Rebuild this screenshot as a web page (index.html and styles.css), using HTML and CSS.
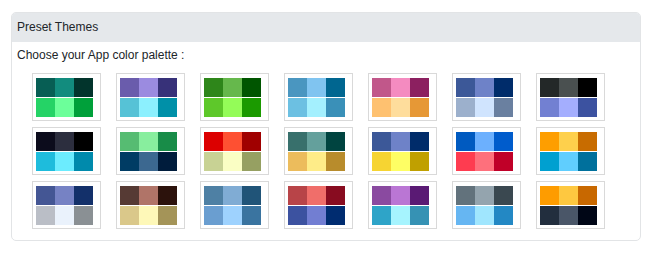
FILE: index.html
```html
<!DOCTYPE html>
<html lang="en">
<head>
  <meta charset="UTF-8">
  <meta name="viewport" content="width=device-width, initial-scale=1.0">
  <title>Preset Themes</title>
  <link rel="stylesheet" href="styles.css">
</head>
<body>
  <div class="panel">
    <div class="panel-heading">Preset Themes</div>
    <div class="panel-body">
      <p class="hint">Choose your App color palette :</p>
      <div class="theme-grid" id="themeGrid"></div>
    </div>
  </div>

  <script>
    // Each theme: 3 header colours + 3 accent colours
    const themes = [
      ['#075e54', '#128c7e', '#02342c', '#25d366', '#6cff9a', '#00a03a'],
      ['#6a5cac', '#9b8be0', '#373179', '#56c2d6', '#8cf0fe', '#0090a8'],
      ['#2e861a', '#66b84c', '#005500', '#5ec82a', '#94fc58', '#1b9a00'],
      ['#4a96c0', '#80c4f0', '#006690', '#6cc0e2', '#a4f0fe', '#3a90b8'],
      ['#c1578a', '#f48bc0', '#8c2060', '#fec170', '#fedd9c', '#e69836'],
      ['#3c5898', '#6e82c8', '#002c6a', '#9cb0cc', '#d0e4fe', '#6a80a0'],
      ['#232828', '#4a5050', '#000000', '#7280d2', '#a4aefe', '#3c52a0'],

      ['#0c0c1c', '#2c2e3e', '#000000', '#1ebcdc', '#6cecfe', '#008aac'],
      ['#56bc72', '#88ee9e', '#188c48', '#003c64', '#3c6890', '#001c3c'],
      ['#dc0000', '#fe5032', '#a00000', '#c8d294', '#fafec4', '#96a062'],
      ['#38706c', '#64a09c', '#004440', '#ecbc5c', '#feec88', '#b88c2c'],
      ['#3c5898', '#6e82c8', '#002c6a', '#f6d432', '#fefe64', '#c0a000'],
      ['#005ac0', '#6cb0fe', '#005ccc', '#fe3c50', '#fe707c', '#c00028'],
      ['#fe9e00', '#fed04c', '#c86c00', '#00a0d0', '#60cefe', '#00709c'],

      ['#445694', '#7682c4', '#13306a', '#babec6', '#eaf2fc', '#8a9094'],
      ['#563a34', '#b07468', '#2c120c', '#dac88a', '#fef8b8', '#a49458'],
      ['#4e80a4', '#80acd4', '#205478', '#6a9ed0', '#9ed2fe', '#3a74a0'],
      ['#b84448', '#f06e6a', '#880c20', '#3c52a0', '#727ed2', '#002c70'],
      ['#8a4aa0', '#ba76d4', '#5a1a74', '#2ea4c8', '#a6f4fe', '#3692b4'],
      ['#62727c', '#94a4ae', '#3a4850', '#66b6f2', '#a0e6fe', '#2388c4'],
      ['#fe9c00', '#fec840', '#c86800', '#222e3e', '#4a5668', '#000616']
    ];

    const grid = document.getElementById('themeGrid');

    themes.forEach(colors => {
      const item = document.createElement('div');
      item.className = 'theme';
      const swatch = document.createElement('div');
      swatch.className = 'swatch';
      colors.forEach(c => {
        const cell = document.createElement('span');
        cell.style.background = c;
        swatch.appendChild(cell);
      });
      item.appendChild(swatch);
      grid.appendChild(item);
    });
  </script>
</body>
</html>
```

FILE: styles.css
```css
/* Reset y tipografía */
* { box-sizing: border-box; margin: 0; padding: 0; }
body { font-family: 'Liberation Sans', Arial, sans-serif; font-size: 12px; color: #212529; background: #fff; padding: 12px 11px 0; }

/* Panel */
.panel { border: 1px solid #e2e4e6; border-radius: 5px; overflow: hidden; }
.panel-heading { background: #e5e8eb; height: 29px; line-height: 29px; padding: 0 5px; }
.panel-body { padding: 6px 5px 11px; }
.hint { line-height: 14px; }

/* Grid de temas */
.theme-grid { display: grid; grid-template-columns: repeat(7, 69px); column-gap: 15px; row-gap: 6px; margin: 11px 0 0 15px; }
.theme { width: 69px; height: 48px; border: 1px solid #d9d9d9; padding: 4px 7px 3px 3px; cursor: pointer; }
.swatch { display: grid; grid-template-columns: repeat(3, 19px); grid-template-rows: 19px 19px; row-gap: 1px; }
.swatch span { display: block; }
```
